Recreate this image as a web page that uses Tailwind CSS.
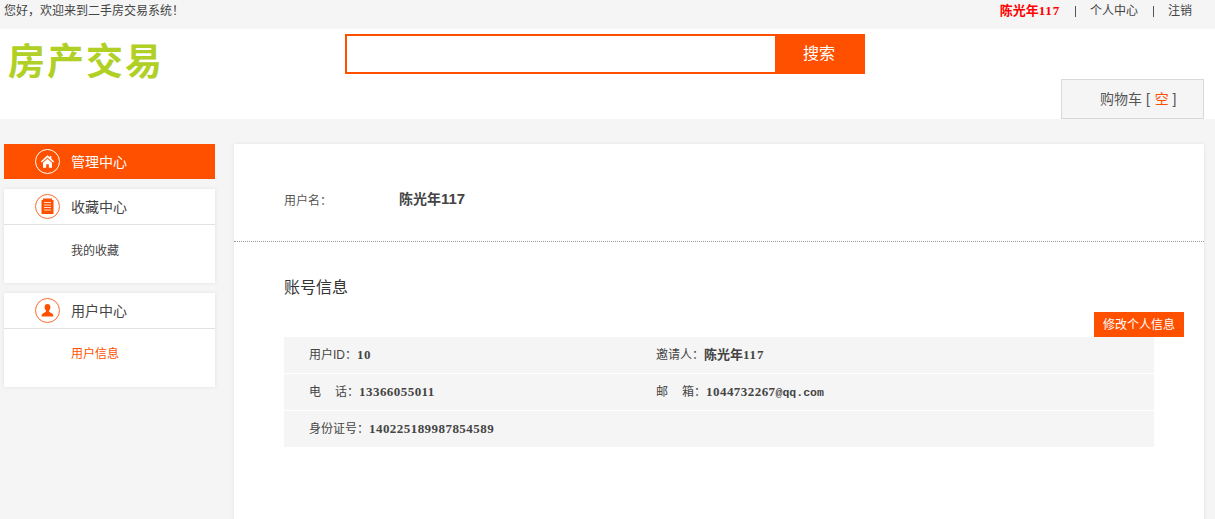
<!DOCTYPE html>
<html lang="zh-CN">
<head>
    <meta charset="UTF-8">
    <title>二手房交易系统 - 用户信息</title>
    <script src="https://cdn.jsdelivr.net/npm/@tailwindcss/browser@4"></script>
</head>
<body class="bg-[#f5f5f5] h-[519px] overflow-hidden text-[#444] text-[12px] font-['Liberation_Sans','Noto_Sans_CJK_SC',sans-serif]">
    <!-- 顶部条 -->
    <div class="h-[29px] flex justify-between pl-[4px] pr-[23px] pt-[3px] leading-[16px]">
        <span>您好，欢迎来到二手房交易系统！</span>
        <div class="flex items-center h-[16px]">
            <span class="text-[#ff0000] font-bold text-[13px]">陈光年<span class="font-['Liberation_Serif'] text-[13px] tracking-[0.8px]">117</span></span>
            <span class="w-px h-[11px] bg-[#555] ml-[15px]"></span>
            <a class="ml-[14px]">个人中心</a>
            <span class="w-px h-[11px] bg-[#555] ml-[15px]"></span>
            <a class="ml-[14px]">注销</a>
        </div>
    </div>
    <!-- 头部 -->
    <div class="h-[90px] bg-white flex">
        <div class="w-[345px] pl-[8px] pt-[11px] text-[#b0d025] text-[37px] font-bold leading-[46px] tracking-[2px]">房产交易</div>
        <div class="w-[520px] h-[40px] mt-[5px] flex border-2 border-[#ff5000]">
            <input type="text" class="flex-1 min-w-0 outline-none bg-white">
            <button class="w-[88px] bg-[#ff5000] text-white text-[16px]">搜索</button>
        </div>
        <div class="ml-[196px] mt-[50px] w-[143px] h-[40px] bg-[#f5f5f5] border border-[#d9d9d9] flex items-center pl-[38px] text-[14px] text-[#555]">
            购物车 [&nbsp;<span class="text-[#ff5000] ml-px">空</span>&nbsp;]
        </div>
    </div>
    <div class="flex pt-[25px] pl-[4px] gap-[19px]">
        <!-- 侧边栏 -->
        <div class="w-[211px] flex flex-col gap-[10px]">
            <div class="h-[35px] bg-[#ff5000] text-white flex items-center pl-[31px] text-[14px]">
                <svg class="w-[25px] h-[25px] mr-[11px]" viewBox="0 0 25 25" fill="none">
                    <circle cx="12.5" cy="12.5" r="12" stroke="#fff"/>
                    <path transform="translate(1.25 1.25) scale(0.9)" d="M12.5 5.5 L5 12.5 L6.2 13.7 L12.5 8 L18.8 13.7 L20 12.5 L16.8 9.5 V6.5 H15 V7.8 Z M7.5 14 L12.5 9.5 L17.5 14 V19.5 H14 V15.5 H11 V19.5 H7.5 Z" fill="#fff"/>
                </svg>
                <span class="mt-px">管理中心</span>
            </div>
            <div class="h-[94px] bg-white shadow-[0_0_4px_rgba(0,0,0,0.08)]">
                <div class="h-[36px] border-b border-[#e2e2e2] flex items-center pl-[31px] text-[14px]">
                    <svg class="w-[25px] h-[25px] mr-[11px]" viewBox="0 0 25 25" fill="none">
                        <circle cx="12.5" cy="12.5" r="12" stroke="#ff6a2a"/>
                        <path d="M8 4.5 H17 V6 H18.5 V20 H6.5 V6 H8 Z" fill="#ff5000"/>
                        <path d="M9 8.5 H16 M9 11 H16 M9 13.5 H16 M9 16 H16" stroke="#fff" stroke-width="0.8"/>
                    </svg>
                    <span class="mt-px">收藏中心</span>
                </div>
                <div class="pl-[67px] pt-[18px] leading-[16px]">我的收藏</div>
            </div>
            <div class="h-[94px] bg-white shadow-[0_0_4px_rgba(0,0,0,0.08)]">
                <div class="h-[36px] border-b border-[#e2e2e2] flex items-center pl-[31px] text-[14px]">
                    <svg class="w-[25px] h-[25px] mr-[11px]" viewBox="0 0 25 25" fill="none">
                        <circle cx="12.5" cy="12.5" r="12" stroke="#ff6a2a"/>
                        <path d="M12.5 6 C14.6 6 15.6 7.6 15.4 9.6 C15.3 11 14.7 12 14 12.8 C14 13.8 14.6 14.2 15.8 14.7 C17.2 15.2 18.5 16.5 18.5 18.5 H6.5 C6.5 16.5 7.8 15.2 9.2 14.7 C10.4 14.2 11 13.8 11 12.8 C10.3 12 9.7 11 9.6 9.6 C9.4 7.6 10.4 6 12.5 6 Z" fill="#ff5000"/>
                    </svg>
                    <span class="mt-px">用户中心</span>
                </div>
                <div class="pl-[67px] pt-[17px] leading-[16px] text-[#ff5000]">用户信息</div>
            </div>
        </div>
        <!-- 主内容 -->
        <div class="w-[970px] h-[400px] bg-white shadow-[0_0_4px_rgba(0,0,0,0.08)]">
            <div class="h-[98px] border-b border-dotted border-[#999] flex items-center pl-[50px] pt-[14px]">
                <span class="w-[115px] text-[#555] pt-[2px]">用户名：</span>
                <span class="text-[14px] font-bold">陈光年<span class="text-[15px]">117</span></span>
            </div>
            <div class="pl-[50px] pr-[20px] pt-[35px]">
                <h2 class="text-[16px] leading-[22px] text-[#333]">账号信息</h2>
                <div class="flex justify-end mt-[13px]">
                    <button class="w-[90px] h-[25px] bg-[#ff5000] text-white text-[12px]">修改个人信息</button>
                </div>
                <div class="w-[870px] flex flex-col gap-px">
                    <div class="h-[36px] bg-[#f5f5f5] flex items-center pl-[25px]">
                        <div class="w-[347px]">用户ID：<b class="font-['Liberation_Serif'] text-[13px] tracking-[0.45px]">10</b></div>
                        <div>邀请人：<b class="text-[13px]">陈光年<span class="font-['Liberation_Serif'] tracking-[0.8px]">117</span></b></div>
                    </div>
                    <div class="h-[36px] bg-[#f5f5f5] flex items-center pl-[25px]">
                        <div class="w-[347px]">电<span class="inline-block w-[14px]"></span>话：<b class="font-['Liberation_Serif'] text-[13px] tracking-[0.45px]">13366055011</b></div>
                        <div>邮<span class="inline-block w-[14px]"></span>箱：<b class="font-['Liberation_Serif'] text-[13px] tracking-[0.45px]">1044732267<span class="font-['Liberation_Mono'] text-[11.5px] tracking-normal">@qq.com</span></b></div>
                    </div>
                    <div class="h-[36px] bg-[#f5f5f5] flex items-center pl-[25px]">
                        <div>身份证号：<b class="font-['Liberation_Serif'] text-[13px] tracking-[0.45px]">140225189987854589</b></div>
                    </div>
                </div>
            </div>
        </div>
    </div>
</body>
</html>
